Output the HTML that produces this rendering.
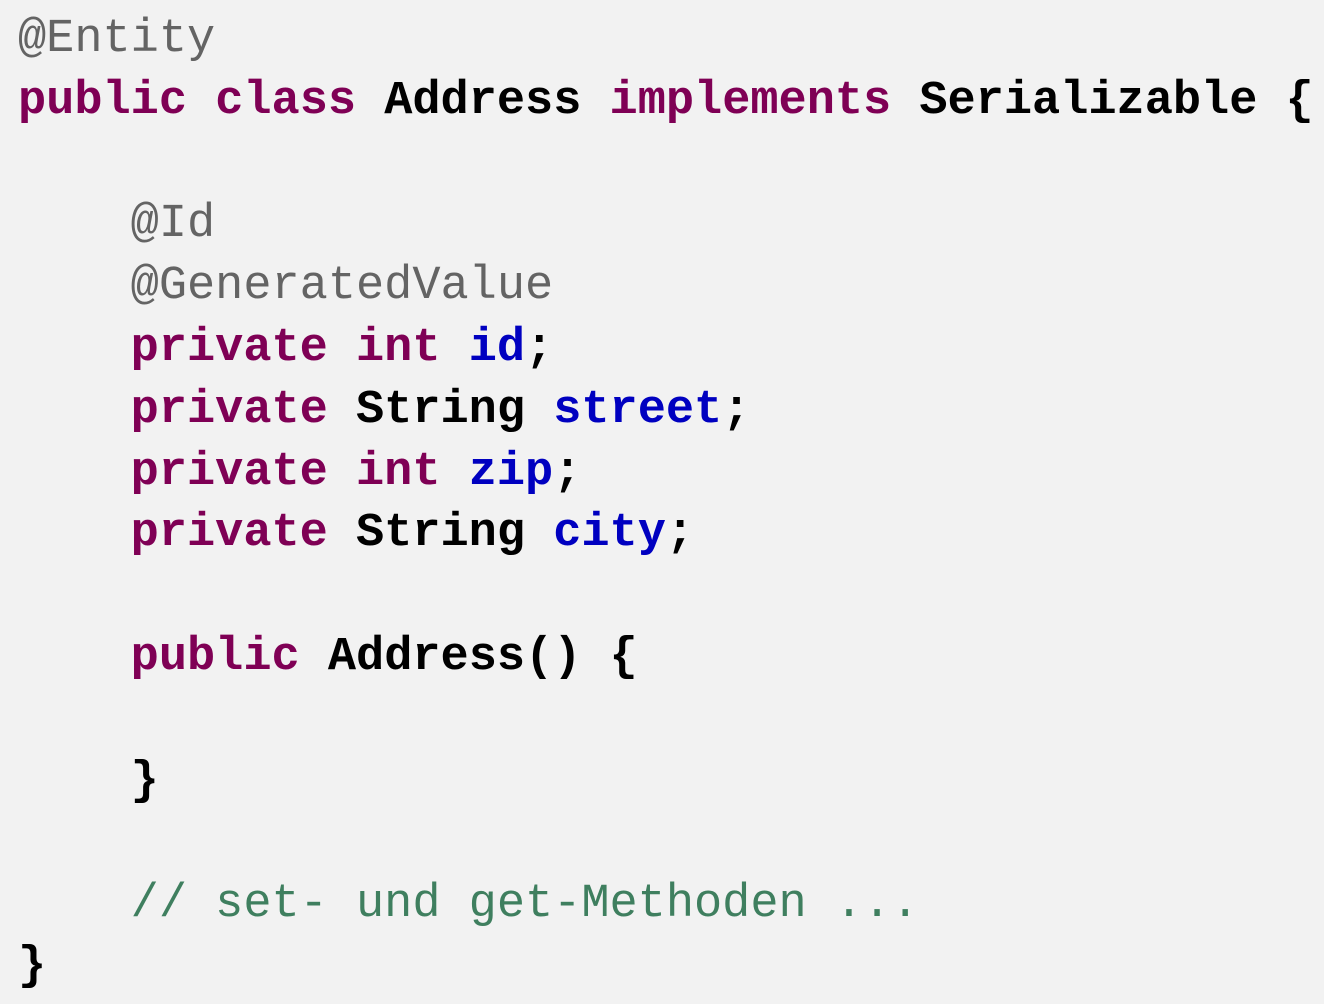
<!DOCTYPE html>
<html><head><meta charset="utf-8"><style>
html,body{margin:0;padding:0;background:#f2f2f2;width:1324px;height:1004px;overflow:hidden}
pre{margin:0;padding:9px 0 0 18px;font-family:"Liberation Mono",monospace;font-size:46.95px;line-height:61.8px;color:#000;font-weight:bold;white-space:pre}
.k{color:#7f0055}.a{color:#646464;font-weight:normal}.f{color:#0000c0}.c{color:#3f7f5f;font-weight:normal}
</style></head><body><pre><span class="a">@Entity</span>
<span class="k">public</span> <span class="k">class</span> Address <span class="k">implements</span> Serializable {

    <span class="a">@Id</span>
    <span class="a">@GeneratedValue</span>
    <span class="k">private</span> <span class="k">int</span> <span class="f">id</span>;
    <span class="k">private</span> String <span class="f">street</span>;
    <span class="k">private</span> <span class="k">int</span> <span class="f">zip</span>;
    <span class="k">private</span> String <span class="f">city</span>;

    <span class="k">public</span> Address() {

    }

    <span class="c">// set- und get-Methoden ...</span>
}</pre></body></html>
